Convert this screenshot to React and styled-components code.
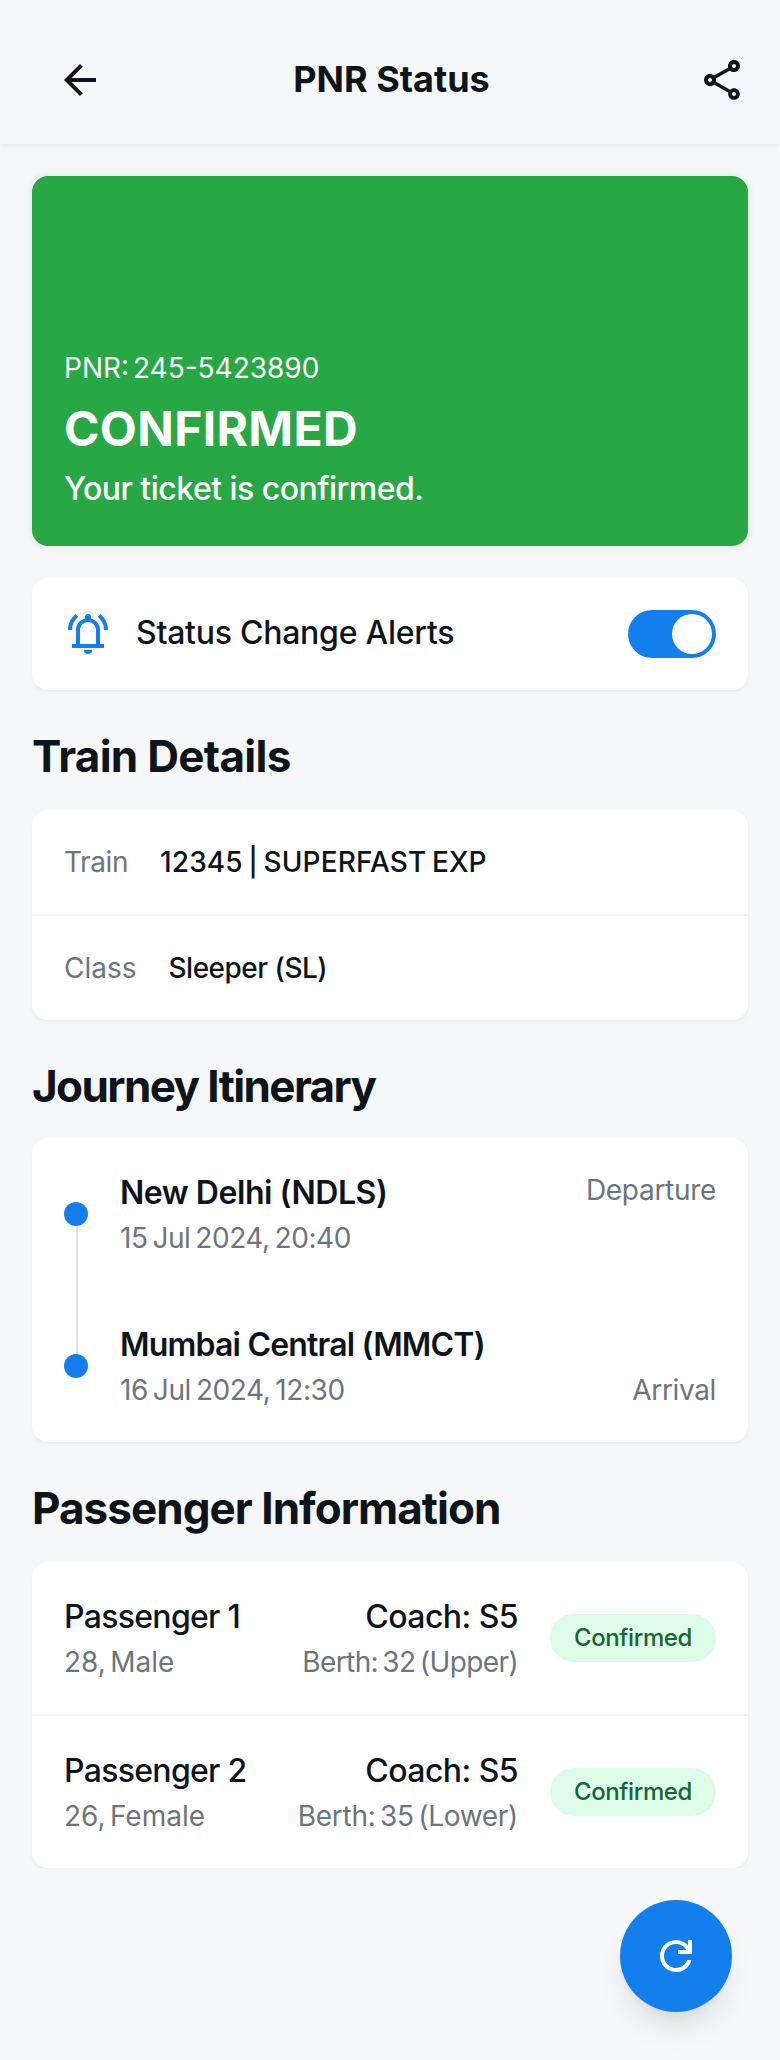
import React from 'react';
import styled, { createGlobalStyle } from 'styled-components';

const Global = createGlobalStyle`
  *, *::before, *::after { box-sizing: border-box; }
  body { margin: 0; background: #f6f7f8; font-family: Inter, "Liberation Sans", sans-serif; color: #0d141b; }
  h1, h2, p { margin: 0; }
  button { border: 0; padding: 0; background: none; color: inherit; font: inherit; cursor: pointer; }
`;

const Text = styled.p`
  font-size: 28px;
  font-weight: ${p => p.$weight || 400};
  line-height: ${p => p.$line || 40}px;
  letter-spacing: ${p => p.$track || 0}px;
  word-spacing: ${p => p.$word || 0}px;
  color: ${p => (p.$muted ? '#6c757d' : 'inherit')};
  white-space: nowrap;
`;

const LargeText = styled(Text)`
  font-size: 32px;
  font-weight: ${p => p.$weight || 500};
  line-height: 45px;
  padding-bottom: 3px;
`;

const StatusText = styled(Text)`
  font-size: 48px;
  font-weight: 700;
  line-height: 75px;
`;

const Page = styled.div`
  width: 780px;
  min-height: 2060px;
  display: flex;
  flex-direction: column;
  background: #f6f7f8;
`;

const Header = styled.header`
  height: 144px;
  padding: 32px;
  display: flex;
  align-items: center;
  box-shadow: 0 2px 4px rgba(0, 0, 0, 0.05);
`;

const HeaderButton = styled.button`
  width: ${p => p.$width}px;
  height: 96px;
  display: flex;
  align-items: center;
  justify-content: center;
  margin-top: 16px;
`;

const Title = styled.h1`
  flex: 1;
  font-size: 36px;
  line-height: 46px;
  font-weight: 700;
  margin: 14px 41px 0 0;
  text-align: center;
`;

const Main = styled.main`
  padding: 32px 32px 0;
  overflow: hidden;
`;

const StatusCard = styled.section`
  height: 370px;
  padding: 32px;
  display: flex;
  flex-direction: column;
  justify-content: flex-end;
  color: #fff;
  background: #28a745;
  border-radius: 16px;
  box-shadow: 0 0 8px rgba(0, 0, 0, 0.1);
`;

const Card = styled.section`
  background: #fff;
  border-radius: 16px;
  box-shadow: 0 2px 4px rgba(0, 0, 0, 0.05);
`;

const AlertCard = styled(Card)`
  height: 112px;
  margin-top: 32px;
  padding: 0 32px;
  display: flex;
  align-items: center;
  gap: 24px;
  svg { color: #137fec; }
`;

const Toggle = styled.button`
  width: 88px;
  height: 48px;
  margin-left: auto;
  padding: 4px;
  display: flex;
  justify-content: flex-end;
  border-radius: 24px;
  background: #137fec;
`;

const Knob = styled.span`
  width: 40px;
  height: 40px;
  border-radius: 50%;
  background: #fff;
`;

const Heading = styled.h2`
  height: ${p => p.$height}px;
  padding-top: 39px;
  font-size: 44px;
  line-height: 55px;
  font-weight: 700;
  letter-spacing: ${p => p.$track}px;
`;

const DetailRow = styled.div`
  height: ${p => (p.$divided ? 106 : 104)}px;
  padding: 32px;
  display: flex;
  gap: 32px;
  border-bottom: ${p => (p.$divided ? '2px solid #f0f1f2' : '0')};
`;

const Itinerary = styled(Card)`
  height: 304px;
  padding: 32px;
  display: flex;
`;

const Rail = styled.div`
  width: 24px;
  margin-right: 32px;
  padding: 32px 0;
  display: flex;
  flex-direction: column;
  align-items: center;
`;

const Dot = styled.span`
  width: 24px;
  height: 24px;
  border-radius: 50%;
  background: #137fec;
`;

const Line = styled.span`
  width: 2px;
  flex: 1;
  margin-left: 2px;
  background: #dee2e6;
`;

const Stops = styled.div`
  flex: 1;
  display: flex;
  flex-direction: column;
  justify-content: space-between;
`;

const Stop = styled.div`
  display: flex;
  justify-content: space-between;
  align-items: ${p => p.$align};
`;

const Lines = styled.div`
  text-align: ${p => p.$align || 'left'};
  margin-left: ${p => (p.$align ? 'auto' : '0')};
`;

const PassengerRow = styled.div`
  height: ${p => (p.$divided ? 154 : 152)}px;
  padding: 32px;
  display: flex;
  align-items: center;
  border-bottom: ${p => (p.$divided ? '2px solid #f0f1f2' : '0')};
`;

const Badge = styled.span`
  width: 166px;
  height: 48px;
  margin-left: 32px;
  border-radius: 24px;
  background: #dcfce7;
  color: #166534;
  font-size: 24px;
  line-height: 48px;
  font-weight: 500;
  letter-spacing: -0.4px;
  text-align: center;
`;

const Refresh = styled.button`
  width: 112px;
  height: 112px;
  margin: 32px 48px 0 auto;
  display: flex;
  align-items: center;
  justify-content: center;
  border-radius: 50%;
  background: #137fec;
  color: #fff;
  box-shadow: 0 20px 30px -6px rgba(0, 0, 0, 0.1), 0 8px 12px -8px rgba(0, 0, 0, 0.1);
`;

const paths = {
  back: 'M20 11H7.83l5.59-5.59L12 4l-8 8 8 8 1.41-1.41L7.83 13H20v-2z',
  share: 'M18 16.08c-.76 0-1.44.3-1.96.77L8.91 12.7c.05-.23.09-.46.09-.7s-.04-.47-.09-.7l7.05-4.11c.54.5 1.25.81 2.04.81 1.66 0 3-1.34 3-3s-1.34-3-3-3-3 1.34-3 3c0 .24.04.47.09.7L8.04 9.81C7.5 9.31 6.79 9 6 9c-1.66 0-3 1.34-3 3s1.34 3 3 3c.79 0 1.5-.31 2.04-.81l7.12 4.16c-.05.21-.08.43-.08.65 0 1.61 1.31 2.92 2.92 2.92s2.92-1.31 2.92-2.92-1.31-2.92-2.92-2.92zM18 4c.55 0 1 .45 1 1s-.45 1-1 1-1-.45-1-1 .45-1 1-1zM6 13c-.55 0-1-.45-1-1s.45-1 1-1 1 .45 1 1-.45 1-1 1zm12 7.02c-.55 0-1-.45-1-1s.45-1 1-1 1 .45 1 1-.45 1-1 1z',
  bell: 'M2 10C2 6.7 3.5 4 5.75 2L7.15 3.4C5.2 5.1 4 7.3 4 10ZM20 10C20 7.3 18.8 5.1 16.85 3.4L18.25 2C20.5 4 22 6.7 22 10ZM4 19V17H6V10C6 7.1 7.9 4.85 10.5 4.2V3.5A1.5 1.5 0 0 1 13.5 3.5V4.2C16.1 4.85 18 7.1 18 10V17H20V19ZM8 17H16V10A4 4 0 0 0 8 10ZM12 22A2 2 0 0 1 10 20H14A2 2 0 0 1 12 22Z',
  refresh: 'M12 20a8 8 0 1 1 6-13.25V4h2v7h-7V9h4.2A6 6 0 1 0 17.65 14h2.1A8 8 0 0 1 12 20Z',
};

const Icon = ({ name }) => (
  <svg width="48" height="48" viewBox="0 0 24 24" fill="currentColor" fillRule="evenodd" aria-hidden="true">
    <path d={paths[name]} />
  </svg>
);

const passengers = [
  { name: 'Passenger 1', info: '28, Male', berth: 'Berth: 32 (Upper)', track: -0.6 },
  { name: 'Passenger 2', info: '26, Female', berth: 'Berth: 35 (Lower)', track: -0.3 },
];

export default function App() {
  return (
    <Page>
      <Global />
      <Header>
        <HeaderButton $width={96} aria-label="Back"><Icon name="back" /></HeaderButton>
        <Title>PNR Status</Title>
        <HeaderButton $width={52} aria-label="Share"><Icon name="share" /></HeaderButton>
      </Header>
      <Main>
        <StatusCard>
          <Text $line={46} $word={-4}>PNR: 245-5423890</Text>
          <StatusText $track={0.35}>CONFIRMED</StatusText>
          <LargeText $track={-0.52}>Your ticket is confirmed.</LargeText>
        </StatusCard>
        <AlertCard>
          <Icon name="bell" />
          <LargeText $track={-0.26}>Status Change Alerts</LargeText>
          <Toggle aria-label="Status Change Alerts"><Knob /></Toggle>
        </AlertCard>
        <Heading $height={120} $track={-0.7}>Train Details</Heading>
        <Card>
          <DetailRow $divided>
            <Text $muted $track={-0.4}>Train</Text>
            <Text $weight={500} $word={-2} $track={0.1}>12345 | SUPERFAST EXP</Text>
          </DetailRow>
          <DetailRow>
            <Text $muted>Class</Text>
            <Text $weight={500} $track={-0.5}>Sleeper (SL)</Text>
          </DetailRow>
        </Card>
        <Heading $height={118} $track={-1.6}>Journey Itinerary</Heading>
        <Itinerary>
          <Rail><Dot /><Line /><Dot /></Rail>
          <Stops>
            <Stop $align="flex-start">
              <Lines>
                <LargeText $weight={600} $track={-0.45}>New Delhi (NDLS)</LargeText>
                <Text $muted $track={-0.45} $word={-2.5}>15 Jul 2024, 20:40</Text>
              </Lines>
              <Text $muted $track={-0.3}>Departure</Text>
            </Stop>
            <Stop $align="flex-end">
              <Lines>
                <LargeText $weight={600} $track={-0.8}>Mumbai Central (MMCT)</LargeText>
                <Text $muted $track={-0.42} $word={-2.5}>16 Jul 2024, 12:30</Text>
              </Lines>
              <Text $muted $track={-0.35}>Arrival</Text>
            </Stop>
          </Stops>
        </Itinerary>
        <Heading $height={120} $track={-0.95}>Passenger Information</Heading>
        <Card>
          {passengers.map((p, i) => (
            <PassengerRow key={p.name} $divided={i === 0}>
              <Lines>
                <LargeText $track={-0.7}>{p.name}</LargeText>
                <Text $muted $word={-3.5}>{p.info}</Text>
              </Lines>
              <Lines $align="right">
                <LargeText $track={-0.55}>Coach: S5</LargeText>
                <Text $muted $word={-3} $track={p.track}>{p.berth}</Text>
              </Lines>
              <Badge>Confirmed</Badge>
            </PassengerRow>
          ))}
        </Card>
      </Main>
      <Refresh aria-label="Refresh"><Icon name="refresh" /></Refresh>
    </Page>
  );
}
